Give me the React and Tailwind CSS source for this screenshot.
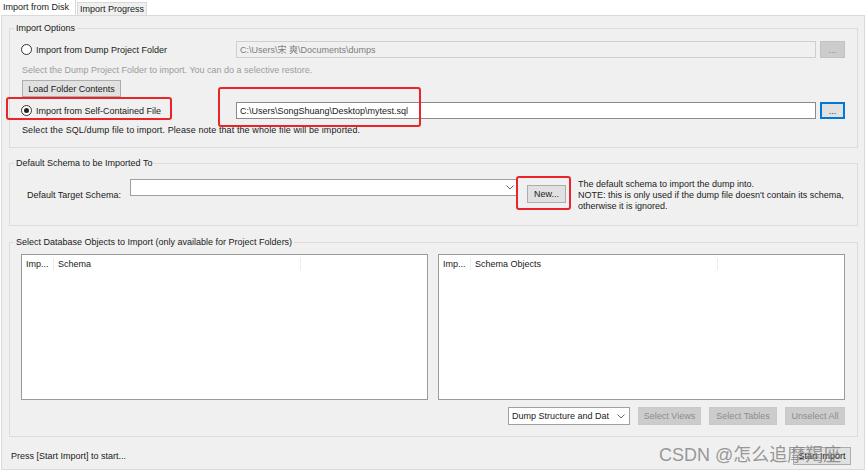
import React from "react";

function Radio({ checked }) {
  return (
    <span className="flex h-[11px] w-[11px] shrink-0 items-center justify-center rounded-full border border-[#333] bg-white">
      {checked && <span className="h-[5px] w-[5px] rounded-full bg-[#222]" />}
    </span>
  );
}

function Chevron() {
  return (
    <svg width="8" height="5" viewBox="0 0 8 5" className="shrink-0">
      <path d="M0.5 0.5 L4 4 L7.5 0.5" fill="none" stroke="#666" strokeWidth="1" />
    </svg>
  );
}

function ListBox({ col }) {
  return (
    <div className="h-[146px] w-[407px] border border-[#9a9a9a] bg-white">
      <div className="flex h-[17px] items-center">
        <div className="w-[32px] border-r border-[#ececec] pl-[4px]">Imp...</div>
        <div className="w-[247px] border-r border-[#ececec] pl-[4px]">{col}</div>
      </div>
    </div>
  );
}

export default function App() {
  return (
    <div className="relative h-[473px] w-[865px] overflow-hidden bg-white font-['Liberation_Sans',sans-serif] text-[9px] leading-[12px] text-[#1a1a1a]">
      {/* tabs */}
      <div className="flex h-[15px] items-end">
        <div className="flex h-[15px] w-[76px] items-start border-r border-[#d9d9d9] bg-white pl-[3px] pt-[1px]">
          Import from Disk
        </div>
        <div className="ml-[1px] flex h-[13px] w-[70px] items-center border border-b-0 border-[#d9d9d9] bg-[#f0f0f0] pl-[2px]">
          Import Progress
        </div>
      </div>

      {/* panel */}
      <div className="ml-[1px] flex h-[455px] w-[864px] flex-col border border-[#dadada] bg-[#f0f0f0] pl-[7px] pr-[6px]">
        {/* Import Options */}
        <fieldset className="mt-[6px] border border-[#dcdcdc]">
          <legend className="ml-[4px] px-[2px]">Import Options</legend>
          <div className="pb-[11px] pl-[11px] pr-[12px] pt-[7px]">
            <div className="flex h-[17px] items-center">
              <div className="flex w-[215px] items-center gap-[4px]">
                <Radio />
                <span>Import from Dump Project Folder</span>
              </div>
              <div className="flex h-[17px] flex-1 items-center border border-[#cfcfcf] bg-[#f0f0f0] pl-[3px] text-[#7d7d7d] font-['Liberation_Sans','Noto_Sans_CJK_SC',sans-serif]">
                C:\Users\宋 爽\Documents\dumps
              </div>
              <div className="ml-[4px] flex h-[17px] w-[25px] items-center justify-center border border-[#c2c2c2] bg-[#cccccc] text-[#8a8a8a]">
                ...
              </div>
            </div>
            <div className="ml-[1px] mt-[6px] text-[#9c9c9c]">
              Select the Dump Project Folder to import. You can do a selective restore.
            </div>
            <div className="ml-[1px] mt-[4px] flex h-[17px] w-[99px] items-center justify-center border border-[#adadad] bg-[#e1e1e1]">
              Load Folder Contents
            </div>
            <div className="mt-[5px] flex h-[17px] items-center">
              <div className="flex w-[215px] items-center gap-[4px]">
                <Radio checked />
                <span>Import from Self-Contained File</span>
              </div>
              <div className="flex h-[17px] flex-1 items-center border border-[#8a8a8a] bg-white pl-[3px]">
                C:\Users\SongShuang\Desktop\mytest.sql
              </div>
              <div className="ml-[4px] flex h-[17px] w-[25px] items-center justify-center border-2 border-[#0078d7] bg-[#e1e1e1] text-[#333]">
                ...
              </div>
            </div>
            <div className="ml-[1px] mt-[5px] tracking-[0.1px]">
              Select the SQL/dump file to import. Please note that the whole file will be imported.
            </div>
          </div>
        </fieldset>

        {/* Default Schema */}
        <fieldset className="mt-[9px] border border-[#dcdcdc]">
          <legend className="ml-[4px] px-[2px]">Default Schema to be Imported To</legend>
          <div className="flex items-start pb-[13px] pl-[17px] pt-[10px]">
            <div className="mt-[10px] w-[103px]">Default Target Schema:</div>
            <div className="flex h-[17px] w-[388px] items-center justify-end border border-[#a0a0a0] bg-white pr-[3px]">
              <Chevron />
            </div>
            <div className="ml-[9px] mt-[6px] flex h-[18px] w-[39px] items-center justify-center border border-[#adadad] bg-[#e1e1e1]">
              New...
            </div>
            <div className="ml-[12px] leading-[11px]">
              <div>The default schema to import the dump into.</div>
              <div>NOTE: this is only used if the dump file doesn't contain its schema,</div>
              <div>otherwise it is ignored.</div>
            </div>
          </div>
        </fieldset>

        {/* Select Database Objects */}
        <fieldset className="mt-[10px] border border-[#dcdcdc]">
          <legend className="ml-[4px] px-[2px]">Select Database Objects to Import (only available for Project Folders)</legend>
          <div className="pb-[11px] pl-[11px] pr-[11px] pt-[6px]">
            <div className="flex gap-[10px]">
              <ListBox col="Schema" />
              <ListBox col="Schema Objects" />
            </div>
            <div className="mt-[7px] flex h-[18px] justify-end gap-[8px] pr-[1px]">
              <div className="flex w-[122px] items-center justify-between border border-[#a0a0a0] bg-white pl-[3px] pr-[4px]">
                <span>Dump Structure and Dat</span>
                <Chevron />
              </div>
              <div className="flex w-[63px] items-center justify-center border border-[#c8c8c8] bg-[#cccccc] text-[#8c8c8c]">
                Select Views
              </div>
              <div className="flex w-[68px] items-center justify-center border border-[#c8c8c8] bg-[#cccccc] text-[#8c8c8c]">
                Select Tables
              </div>
              <div className="flex w-[60px] items-center justify-center border border-[#c8c8c8] bg-[#cccccc] text-[#8c8c8c]">
                Unselect All
              </div>
            </div>
          </div>
        </fieldset>

        {/* status */}
        <div className="mt-[10px] flex items-center justify-between pl-[2px] pr-[7px]">
          <span>Press [Start Import] to start...</span>
          <div className="flex h-[18px] w-[58px] items-center justify-center border border-[#adadad] bg-[#e1e1e1]">
            Start Import
          </div>
        </div>
      </div>

      {/* annotation overlays */}
      <div className="pointer-events-none absolute left-[6px] top-[97px] h-[23px] w-[166px] rounded-[3px] border-2 border-[#e8262a]" />
      <div className="pointer-events-none absolute left-[218px] top-[87px] h-[40px] w-[203px] rounded-[3px] border-2 border-[#e8262a]" />
      <div className="pointer-events-none absolute left-[516px] top-[176px] h-[34px] w-[55px] rounded-[3px] border-2 border-[#e8262a]" />

      {/* watermark */}
      <div className="pointer-events-none absolute left-[659px] top-[443px] whitespace-nowrap font-['Liberation_Sans','Noto_Sans_CJK_SC',sans-serif] text-[18px] leading-[24px] text-[#7f7f7f]/80">
        CSDN @怎么追摩羯座
      </div>
    </div>
  );
}
